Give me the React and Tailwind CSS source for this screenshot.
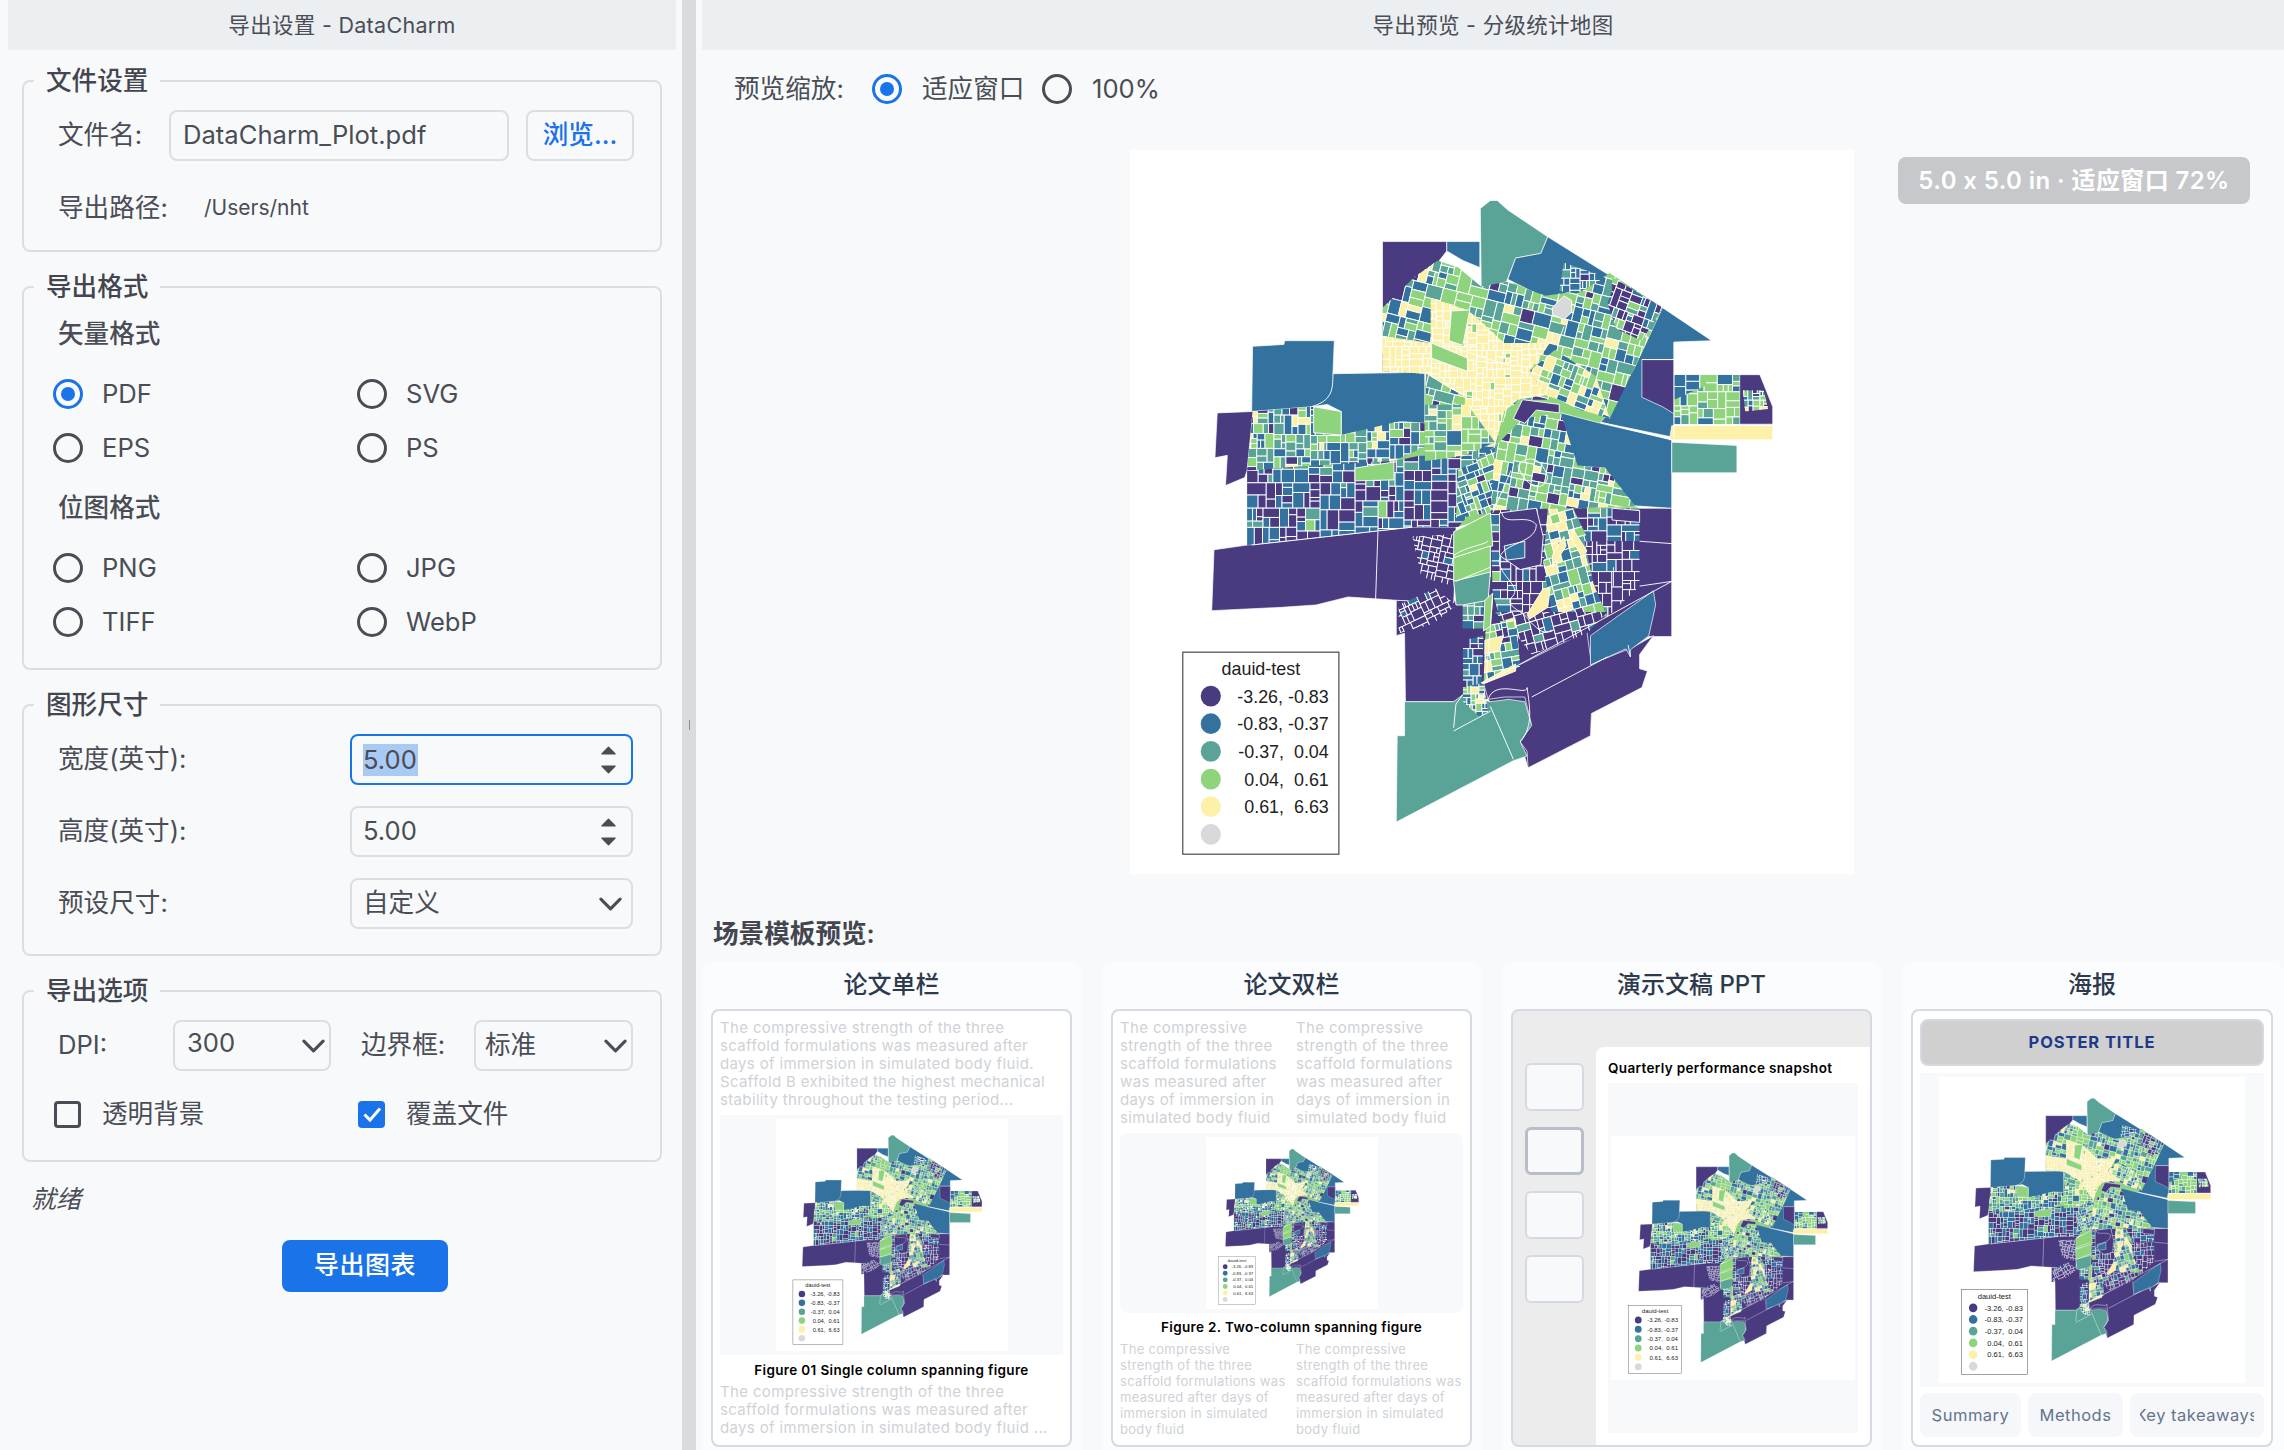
import React from "react";

const P = "#4a3a80", B = "#33719f", T = "#5aa497", G = "#8dd47d", Y = "#fdf0a9", GR = "#d9d9d9";
const COLORS = [P, B, T, G, Y];

function rng(seed) {
  let a = seed >>> 0;
  return () => {
    a |= 0; a = (a + 0x6d2b79f5) | 0;
    let t = Math.imul(a ^ (a >>> 15), 1 | a);
    t = (t + Math.imul(t ^ (t >>> 7), 61 | t)) ^ t;
    return ((t ^ (t >>> 14)) >>> 0) / 4294967296;
  };
}

const SOLIDS = [
  [G, "320,860 320,700 333,575 700,590 710,490 615,490 615,355 685,290 735,255 830,310 1110,282 1225,355 1165,480 1110,590 1090,600 1165,775 1175,780 1175,860 850,800 780,820 680,820"],
  [P, "850,780 1245,780 1245,1052 1195,1052 1155,1080 1070,1110 1070,1215 1068,1262 932,1330 915,1275 845,1185 790,1180 770,1190 665,1190 663,1045 645,1050 645,975 770,980"],
  [B, "332,437 400,433 402,425 510,425 507,495 707,492 707,600 650,596 645,625 525,625 525,575 495,560 460,565 330,575"],
  [P, "255,578 333,575 320,700 315,715 273,732 277,668 250,673"],
  [P, "248,868 320,858 680,820 775,820 775,890 770,980 645,975 600,972 540,968 470,985 395,990 243,997"],
  [T, "663,1190 770,1190 790,1175 850,1190 890,1185 925,1190 940,1240 915,1275 930,1305 900,1315 645,1445 647,1262 663,1262"],
  [P, "835,1150 1060,1040 1070,1110 1160,1075 1205,1050 1175,1090 1175,1120 1192,1125 1180,1160 1070,1215 1068,1262 932,1330 930,1295 915,1275 940,1240 925,1180 880,1180 845,1185"],
  [B, "1068,1050 1205,955 1210,985 1195,1050 1155,1080 1155,1095 1145,1078 1068,1112"],
  [B, "1003,578 1090,600 1245,635 1245,780 1165,775 1120,735 1100,695 1030,690"],
  [B, "1225,355 1332,425 1250,428 1250,630 1090,598 1110,575 1165,480"],
  [P, "1180,465 1250,465 1250,580 1225,565 1180,545"],
  [Y, "1245,605 1465,605 1465,635 1240,635"],
  [T, "1245,640 1387,647 1387,705 1245,705"],
  [T, "828,145 850,128 865,128 888,148 975,205 960,240 905,250 885,300 830,315"],
  [B, "975,205 1115,290 1040,325 970,335 888,295 905,250 960,240"],
  [P, "615,215 755,215 755,235 735,260 735,285 685,290 685,350 615,355"],
  [B, "755,215 827,215 827,270 790,255 755,235"],
  [P, "1393,497 1437,497 1465,565 1465,602 1393,602"],
];

const ZONES = [
  // [polygon, weights, cell size, rotation]
  ["685,290 735,255 780,270 830,310 885,300 970,330 1040,320 1110,282 1225,355 1165,480 1110,590 1040,570 1000,550 910,550 880,590 860,650 790,650 710,600 710,495 615,490 615,355", [0.03, 0.2, 0.3, 0.37, 0.1], 25, 14],
  ["1115,290 1225,355 1180,425 1125,400 1105,345 1115,320", [0.62, 0.2, 0.06, 0.08, 0.04], 19, 20],
  ["1010,260 1100,290 1040,325 1000,320", [0.02, 0.7, 0.18, 0.1, 0], 18, 0],
  ["720,335 800,360 830,385 880,430 980,430 935,490 970,540 910,550 880,575 860,650 790,650 795,545 710,495 615,490 615,415 720,430", [0, 0, 0, 0.04, 0.96], 17, 0],
  ["935,490 990,445 1080,500 1110,590 1040,570 1000,550 970,540", [0, 0.18, 0.22, 0.3, 0.3], 21, 20],
  ["1250,520 1320,497 1393,497 1393,602 1250,602", [0, 0.06, 0.14, 0.7, 0.1], 21, 0],
  ["1250,497 1320,497 1320,520 1250,550", [0, 0.92, 0.03, 0.05, 0], 26, 0],
  ["320,700 333,575 460,565 525,575 525,625 650,596 707,600 707,650 640,680 560,690 460,690", [0.07, 0.3, 0.27, 0.26, 0.1], 19, 0],
  ["320,700 460,690 640,680 790,650 860,650 860,730 780,820 680,820 320,858", [0.5, 0.36, 0.1, 0.04, 0], 24, 0],
  ["707,560 800,560 860,640 790,670 707,680", [0, 0.06, 0.38, 0.46, 0.1], 22, 0],
  ["780,700 860,650 895,700 850,790 775,800", [0.05, 0.32, 0.2, 0.35, 0.08], 18, -20],
  ["860,650 920,590 1003,578 1040,690 1100,695 1165,775 1040,780 850,790", [0.14, 0.1, 0.24, 0.4, 0.12], 22, 10],
  ["850,785 1000,780 975,880 985,990 870,1010 855,960", [0.74, 0.16, 0.08, 0.02, 0], 26, 0],
  ["975,780 1060,780 1075,940 1105,1010 985,1010 965,900", [0.06, 0.22, 0.3, 0.22, 0.2], 21, -15],
  ["1030,780 1175,780 1175,850 1065,850", [0.3, 0.55, 0.12, 0.03, 0], 22, 0],
  ["1055,850 1175,850 1175,945 1105,1010 1075,940", [0.9, 0.07, 0.03, 0, 0], 22, 0],
  ["860,1000 1105,1000 1060,1045 940,1090 900,1040", [0.82, 0.08, 0.07, 0.02, 0.01], 21, -15],
  ["840,1030 905,1010 915,1115 835,1150", [0.05, 0.18, 0.22, 0.3, 0.25], 20, -10],
  ["790,1060 835,1050 830,1160 790,1180", [0.25, 0.63, 0.08, 0.04, 0], 20, 0],
  ["790,975 835,975 835,1035 790,1035", [0.42, 0.24, 0.34, 0, 0], 18, 0],
  ["790,1160 835,1150 845,1215 825,1220 790,1190", [0, 0.5, 0.1, 0.3, 0.1], 14, 0],
  ["1400,530 1445,530 1455,570 1405,575", [0.04, 0.2, 0.32, 0.34, 0.1], 12, 0],
  ["680,840 770,835 770,945 700,925", [0.92, 0.08, 0, 0, 0], 17, 12],
  ["650,985 730,950 775,985 725,1025 650,1045", [0.86, 0.14, 0, 0, 0], 17, -25],
];

const TOP_POLYS = [
  [G, "465,565 525,575 525,625 465,620"],
  [G, "555,695 640,682 640,720 555,722"],
  [G, "765,362 805,360 790,435 760,425"],
  [G, "722,430 800,462 800,490 722,462"],
  [P, "900,590 920,550 1000,560 1000,578 950,572 925,600"],
  [G, "770,830 850,790 855,860 770,885"],
  [G, "770,885 850,860 850,925 770,935"],
  [T, "770,935 850,915 845,975 790,985 775,985"],
  [G, "838,975 855,960 850,1030 835,1040"],
  [P, "870,790 950,780 965,840 960,900 915,910 870,880"],
  [B, "880,860 925,850 925,885 885,890"],
  [Y, "930,1005 965,950 980,950 975,990 935,1015"],
  [Y, "830,1150 905,1110 905,1125 835,1152"],
  [Y, "838,1060 878,1050 870,1080 838,1090"],
  [Y, "985,880 1010,840 1015,860 985,905"],
  [Y, "1030,825 1060,870 1050,885 1028,845"],
  [P, "1115,780 1175,785 1175,810 1115,805"],
  [GR, "985,355 1010,330 1027,340 1027,365 1010,380 985,370"],
];

const LINES = [
  "M507 495 C507 530 505 552 460 565",
  "M605 830 L600 972",
  "M1118 905 L1118 945",
  "M1175 850 L1245 855",
  "M1175 945 L1245 935",
  "M770 1245 L775 1195 L790 1175 M770 1252 L850 1210",
  "M850 1200 L900 1312",
  "M330 858 L680 820",
  "M845 1185 C860 1140 930 1180 930 1160 C935 1200 945 1240 915 1275",
  "M985 1040 C960 1050 950 1030 935 1020 C930 1000 880 990 895 970 C920 950 880 930 870 900 C860 850 950 860 950 815 C930 790 880 820 875 790",
  "M985 410 C980 440 1000 430 1010 395",
  "M910 690 C925 670 960 665 975 715 C965 750 925 735 910 690",
  "M720 420 C770 440 830 460 900 480 M700 480 C740 520 790 540 830 550 M1150 1070 L1155 1095",
  "M770 880 C800 860 830 860 845 850 M775 935 L850 905",
  "M1250 428 L1250 630 M1180 465 L1250 465 M1090 598 L1245 635",
  "M940 1180 L1105 1095 M840 1150 L1245 935 M855 970 L840 1150 M895 700 L855 790",
];

const MAP_CONTENT = ZONES.map(([pts, w, s, rot], i) => {
  const r = rng(1009 * (i + 3));
  const nums = pts.split(/[ ,]/).map(Number);
  const xs = nums.filter((_, k) => k % 2 === 0), ys = nums.filter((_, k) => k % 2 === 1);
  const x0 = Math.min(...xs), x1 = Math.max(...xs), y0 = Math.min(...ys), y1 = Math.max(...ys);
  const cx = (x0 + x1) / 2, cy = (y0 + y1) / 2;
  const pad = rot ? Math.max(x1 - x0, y1 - y0) * 0.35 : 2;
  const pick = () => {
    let v = r();
    for (let k = 0; k < 5; k++) { v -= w[k]; if (v < 0) return COLORS[k]; }
    return COLORS[w.indexOf(Math.max(...w))];
  };
  const cells = [];
  const split = (x, y, cw, ch) => {
    const limit = s * s * (0.45 + r() * 1.7);
    if (cw * ch < limit || (cw < s * 0.5 && ch < s * 0.5)) {
      cells.push(<rect key={cells.length} x={x} y={y} width={cw} height={ch} fill={pick()} />);
      return;
    }
    const t = 0.32 + r() * 0.36;
    if (cw > ch * (0.7 + r() * 0.6)) {
      split(x, y, cw * t, ch);
      split(x + cw * t, y, cw * (1 - t), ch);
    } else {
      split(x, y, cw, ch * t);
      split(x, y + ch * t, cw, ch * (1 - t));
    }
  };
  split(x0 - pad, y0 - pad, x1 - x0 + 2 * pad, y1 - y0 + 2 * pad);
  return (
    <g key={i}>
      <clipPath id={"mz" + i}><polygon points={pts} /></clipPath>
      <g clipPath={"url(#mz" + i + ")"}>
        <g transform={"rotate(" + rot + " " + cx + " " + cy + ")"} stroke="#ffffff" strokeWidth="2">{cells}</g>
      </g>
    </g>
  );
});

const LEGEND = [
  [P, "-3.26, -0.83"],
  [B, "-0.83, -0.37"],
  [T, "-0.37,\u00a0\u00a00.04"],
  [G, "0.04,\u00a0\u00a00.61"],
  [Y, "0.61,\u00a0\u00a06.63"],
  [GR, ""],
];

function MapPlot({ className }) {
  return (
    <div className={"bg-white shrink-0 " + className}>
      <svg viewBox="65 21 1577 1534" preserveAspectRatio="none" className="block w-full h-full">
        {SOLIDS.map(([f, p], i) => <polygon key={i} points={p} fill={f} stroke="#ffffff" strokeWidth="1.5" />)}
        {MAP_CONTENT}
        {TOP_POLYS.map(([f, p], i) => <polygon key={i} points={p} fill={f} stroke="#ffffff" strokeWidth="2" />)}
        {LINES.map((d, i) => <path key={i} d={d} fill="none" stroke="#ffffff" strokeWidth="2" />)}
        <rect x="180" y="1085" width="340" height="428" fill="#ffffff" stroke="#444444" strokeWidth="2.5" />
        <g className="font-[family-name:'Liberation_Sans',sans-serif]" fontSize="39" fill="#222222">
          <text x="350" y="1133" textAnchor="middle">dauid-test</text>
          {LEGEND.map(([c, t], i) => (
            <g key={i}>
              <circle cx="241" cy={1178 + i * 58.6} r="22" fill={c} />
              {t && <text x="498" y={1192 + i * 58.6} textAnchor="end">{t}</text>}
            </g>
          ))}
        </g>
      </svg>
    </div>
  );
}

function Radio({ checked, label }) {
  return (
    <div className="flex items-center h-[40px]">
      {checked ? (
        <span className="w-[30px] h-[30px] rounded-full border-[3px] border-[#1a73e8] flex items-center justify-center shrink-0">
          <span className="w-[14px] h-[14px] rounded-full bg-[#1a73e8]" />
        </span>
      ) : (
        <span className="w-[30px] h-[30px] rounded-full border-[3px] border-[#4a4d55] shrink-0" />
      )}
      <span className="ml-[19px]">{label}</span>
    </div>
  );
}

function Check({ checked, label }) {
  return (
    <div className="flex items-center h-[40px]">
      {checked ? (
        <span className="w-[27px] h-[27px] rounded-[4px] bg-[#1a73e8] flex items-center justify-center shrink-0">
          <svg viewBox="0 0 24 24" className="w-[24px] h-[24px]" fill="none" stroke="#ffffff" strokeWidth="3"><path d="M4.5 12.5 L10 18 L20 6.5" /></svg>
        </span>
      ) : (
        <span className="w-[27px] h-[27px] rounded-[4px] border-[3px] border-[#4a4d55] shrink-0" />
      )}
      <span className="ml-[21px]">{label}</span>
    </div>
  );
}

function Chevron() {
  return (
    <svg viewBox="0 0 24 14" className="w-[23px] h-[14px] shrink-0 -mr-[6px]" fill="none" stroke="#4a4d55" strokeWidth="3.2" strokeLinecap="round" strokeLinejoin="round">
      <path d="M2 2 L12 12 L22 2" />
    </svg>
  );
}

function Stepper() {
  return (
    <svg viewBox="0 0 16 30" className="w-[15px] h-[30px] shrink-0" fill="#4a4d55" stroke="#4a4d55" strokeWidth="1.5" strokeLinejoin="round">
      <path d="M8 1.5 L15 8.5 L1 8.5 Z" />
      <path d="M8 28.5 L15 21.5 L1 21.5 Z" />
    </svg>
  );
}

function Group({ title, className, children }) {
  return (
    <section className={"relative border-2 border-[#dcdee2] rounded-[8px] " + className}>
      <h3 className="absolute left-[10px] -top-[19px] px-[12px] h-[36px] leading-[36px] bg-[#f8f9fb] text-[25.6px] font-medium text-[#43464e]">{title}</h3>
      {children}
    </section>
  );
}

function Field({ focused, children }) {
  return (
    <div className={"h-[51px] w-[283px] bg-[#f8f9fb] rounded-[8px] flex items-center justify-between pl-[11px] pr-[15px] " + (focused ? "border-2 border-[#1a73e8]" : "border-2 border-[#dcdee2]")}>
      {children}
    </div>
  );
}

const Lines = ({ items, className }) => (
  <div className={className}>
    {items.map((t, i) => <div key={i} className="whitespace-nowrap">{t}</div>)}
  </div>
);

const Body = "text-[#ced2d7] text-[15px] leading-[18px] tracking-[0.35px]";
const Body2 = "text-[#ced2d7] text-[13px] leading-[16px] tracking-[0.3px]";
const CapStyle = "text-center text-black text-[13.5px] leading-[18px] font-semibold tracking-[0.35px] whitespace-nowrap";

function Card({ title, wide, children }) {
  return (
    <div className={"bg-[#fbfcfd] rounded-t-[10px] pt-[8px] h-[488px] shrink-0 " + (wide ? "w-[382px] pl-[9px] pr-[11px]" : "w-[379px] px-[9px]")}>
      <div className="text-center text-[24px] leading-[30px] font-medium text-[#2d3a4e] mb-[9px]">{title}</div>
      {children}
    </div>
  );
}

const COL = [
  "The compressive",
  "strength of the three",
  "scaffold formulations",
  "was measured after",
  "days of immersion in",
  "simulated body fluid",
];
const COL2 = [
  "The compressive",
  "strength of the three",
  "scaffold formulations was",
  "measured after days of",
  "immersion in simulated",
  "body fluid",
];

export default function App() {
  return (
    <div className="w-[2284px] h-[1450px] overflow-hidden flex bg-[#f8f9fb] text-[#4a4d55] text-[25.6px] font-[family-name:Inter,'Noto_Sans_CJK_SC',sans-serif]">
      {/* left panel */}
      <div className="w-[682px] shrink-0 pl-[8px] pr-[6px]">
        <div className="h-[50px] bg-[#eceff2] flex items-center justify-center text-[21.5px] tracking-[0.3px]">导出设置 - DataCharm</div>
        <div className="mx-[14px] mt-[30px] flex flex-col gap-[34px]">
          <Group title="文件设置" className="h-[172px] pt-[28px] pl-[34px]">
            <div className="flex items-center h-[51px]">
              <span className="w-[111px]">文件名:</span>
              <div className="w-[340px] h-[51px] border-2 border-[#dcdee2] rounded-[8px] flex items-center pl-[12px]">DataCharm_Plot.pdf</div>
              <div className="ml-[17px] w-[108px] h-[51px] border-2 border-[#dcdee2] rounded-[8px] flex items-center justify-center text-[#1a73e8] font-medium">浏览...</div>
            </div>
            <div className="flex items-center h-[50px] mt-[22px]">
              <span className="w-[146px]">导出路径:</span>
              <span className="text-[21px]">/Users/nht</span>
            </div>
          </Group>

          <Group title="导出格式" className="h-[384px] pt-[26px] pl-[29px]">
            <div className="h-[40px] leading-[40px] pl-[5px] font-medium">矢量格式</div>
            <div className="grid grid-cols-[304px_1fr] mt-[20px] gap-y-[14px]">
              <Radio checked label="PDF" />
              <Radio label="SVG" />
              <Radio label="EPS" />
              <Radio label="PS" />
            </div>
            <div className="h-[40px] leading-[40px] pl-[5px] font-medium mt-[20px]">位图格式</div>
            <div className="grid grid-cols-[304px_1fr] mt-[20px] gap-y-[14px]">
              <Radio label="PNG" />
              <Radio label="JPG" />
              <Radio label="TIFF" />
              <Radio label="WebP" />
            </div>
          </Group>

          <Group title="图形尺寸" className="h-[252px] pt-[28px] pl-[34px] pr-[27px]">
            <div className="flex flex-col gap-[21px]">
              <div className="flex items-center justify-between">
                <span>宽度(英寸):</span>
                <Field focused>
                  <span className="bg-[#a9caf4] leading-[32px] pr-[1px]">5.00</span>
                  <Stepper />
                </Field>
              </div>
              <div className="flex items-center justify-between">
                <span>高度(英寸):</span>
                <Field>
                  <span>5.00</span>
                  <Stepper />
                </Field>
              </div>
              <div className="flex items-center justify-between">
                <span>预设尺寸:</span>
                <Field>
                  <span>自定义</span>
                  <Chevron />
                </Field>
              </div>
            </div>
          </Group>

          <Group title="导出选项" className="h-[172px] pt-[28px] pl-[34px] pr-[27px]">
            <div className="flex items-center h-[51px]">
              <span className="w-[115px]">DPI:</span>
              <div className="w-[158px] h-[51px] border-2 border-[#dcdee2] rounded-[8px] flex items-center justify-between pl-[12px] pr-[10px]"><span className="mb-[4px]">300</span><Chevron /></div>
              <span className="ml-[30px] w-[113px]">边界框:</span>
              <div className="w-[159px] h-[51px] border-2 border-[#dcdee2] rounded-[8px] flex items-center justify-between pl-[9px] pr-[10px]">标准<Chevron /></div>
            </div>
            <div className="grid grid-cols-[304px_1fr] -ml-[4px] mt-[23px]">
              <Check label="透明背景" />
              <Check checked label="覆盖文件" />
            </div>
          </Group>
        </div>
        <div className="ml-[23px] mt-[21px] italic text-[25px] leading-[32px]">就绪</div>
        <button className="block ml-[274px] mt-[25px] w-[166px] h-[52px] bg-[#1a73e8] rounded-[8px] text-white font-medium text-[25px] tracking-[0.5px]">导出图表</button>
      </div>

      {/* splitter */}
      <div className="w-[14px] h-full bg-[#dadbdf] shrink-0 flex items-center justify-center">
        <span className="w-[1px] h-[10px] bg-[#8e9096]" />
      </div>

      {/* right panel */}
      <div className="flex-1 min-w-0 pl-[6px]">
        <div className="h-[50px] bg-[#eceff2] flex items-center justify-center text-[21.5px] tracking-[0.3px]">导出预览 - 分级统计地图</div>
        <div className="flex items-center h-[40px] mt-[19px] pl-[32px]">
          <span className="w-[138px]">预览缩放:</span>
          <span className="w-[30px] h-[30px] rounded-full border-[3px] border-[#1a73e8] flex items-center justify-center">
            <span className="w-[14px] h-[14px] rounded-full bg-[#1a73e8]" />
          </span>
          <span className="ml-[20px] w-[120px]">适应窗口</span>
          <span className="w-[30px] h-[30px] rounded-full border-[3px] border-[#4a4d55]" />
          <span className="ml-[20px]">100%</span>
        </div>
        <div className="relative mt-[41px] pl-[428px]">
          <MapPlot className="w-[724px] h-[724px]" />
          <div className="absolute right-[34px] top-[7px] h-[47px] w-[352px] rounded-[8px] bg-[#c6c8cb] text-white text-[24px] font-semibold flex items-center justify-center tracking-[0.4px] pt-[1px]">5.0 x 5.0 in · 适应窗口 72%</div>
        </div>

        <div className="mt-[42px] pl-[11px] h-[36px] leading-[36px] text-[25.6px] font-semibold text-[#43464e]">场景模板预览:</div>
        <div className="flex gap-[21px] mt-[10px]">
          <Card title="论文单栏">
            <div className="h-[438px] bg-white border-2 border-[#d5dae3] rounded-[8px] overflow-hidden pt-[8px] px-[7px]">
              <Lines className={Body} items={[
                "The compressive strength of the three",
                "scaffold formulations was measured after",
                "days of immersion in simulated body fluid.",
                "Scaffold B exhibited the highest mechanical",
                "stability throughout the testing period...",
              ]} />
              <div className="mt-[6px] h-[240px] bg-[#f8f9fb] flex items-center justify-center">
                <MapPlot className="w-[232px] h-[232px]" />
              </div>
              <div className={CapStyle + " mt-[6px]"}>Figure 01 Single column spanning figure</div>
              <Lines className={Body + " mt-[4px]"} items={[
                "The compressive strength of the three",
                "scaffold formulations was measured after",
                "days of immersion in simulated body fluid ...",
              ]} />
            </div>
          </Card>
          <Card title="论文双栏">
            <div className="h-[438px] bg-white border-2 border-[#d5dae3] rounded-[8px] overflow-hidden pt-[8px] px-[7px]">
              <div className="grid grid-cols-[176px_1fr]">
                <Lines className={Body} items={COL} />
                <Lines className={Body} items={COL} />
              </div>
              <div className="mt-[6px] h-[180px] bg-[#f8f9fb] rounded-[8px] flex items-center justify-center">
                <MapPlot className="w-[172px] h-[172px]" />
              </div>
              <div className={CapStyle + " mt-[5px]"}>Figure 2. Two-column spanning figure</div>
              <div className="grid grid-cols-[176px_1fr] mt-[5px]">
                <Lines className={Body2} items={COL2} />
                <Lines className={Body2} items={COL2} />
              </div>
            </div>
          </Card>
          <Card title="演示文稿 PPT">
            <div className="h-[438px] bg-[#ececec] border-2 border-[#d5dae3] rounded-[8px] overflow-hidden flex flex-col">
              <div className="h-[36px] shrink-0" />
              <div className="flex-1 flex min-h-0">
                <div className="w-[83px] shrink-0 pl-[12px] pt-[16px] flex flex-col gap-[16px]">
                  <div className="w-[59px] h-[48px] rounded-[6px] bg-[#f8f9fb] border-2 border-[#d5d9e2]" />
                  <div className="w-[59px] h-[48px] rounded-[6px] bg-[#f8f9fb] border-[3px] border-[#b9bdc8]" />
                  <div className="w-[59px] h-[48px] rounded-[6px] bg-[#f8f9fb] border-2 border-[#d5d9e2]" />
                  <div className="w-[59px] h-[48px] rounded-[6px] bg-[#f8f9fb] border-2 border-[#d5d9e2]" />
                </div>
                <div className="flex-1 bg-white rounded-tl-[8px] pl-[12px] pr-[12px] pt-[12px]">
                  <div className="text-black text-[13.5px] leading-[18px] font-semibold tracking-[0.35px] whitespace-nowrap">Quarterly performance snapshot</div>
                  <div className="mt-[6px] h-[350px] bg-[#f8f9fb] flex items-center justify-center">
                    <MapPlot className="w-[244px] h-[244px]" />
                  </div>
                </div>
              </div>
            </div>
          </Card>
          <Card title="海报" wide>
            <div className="h-[438px] bg-white border-2 border-[#d5dae3] rounded-[8px] overflow-hidden pt-[8px] px-[7px]">
              <div className="h-[47px] bg-[#d0d0d0] border-2 border-[#d5d9e2] rounded-[8px] flex items-center justify-center text-[#1e3a8a] text-[16.5px] font-bold tracking-[0.9px]">POSTER TITLE</div>
              <div className="mt-[7px] h-[314px] bg-[#f8f9fb] flex items-center justify-center">
                <MapPlot className="w-[306px] h-[306px]" />
              </div>
              <div className="mt-[6px] flex gap-[7px] h-[44px] text-[#64748b] text-[16.5px] tracking-[0.5px]">
                <div className="w-[101px] rounded-[8px] bg-[#f5f7fa] flex items-center justify-center">Summary</div>
                <div className="w-[95px] rounded-[8px] bg-[#f5f7fa] flex items-center justify-center">Methods</div>
                <div className="flex-1 min-w-0 rounded-[8px] bg-[#f5f7fa] flex items-center justify-center px-[10px]">
                  <div className="overflow-hidden flex justify-center w-full"><span className="whitespace-nowrap shrink-0">Key takeaways</span></div>
                </div>
              </div>
            </div>
          </Card>
        </div>
      </div>
    </div>
  );
}
